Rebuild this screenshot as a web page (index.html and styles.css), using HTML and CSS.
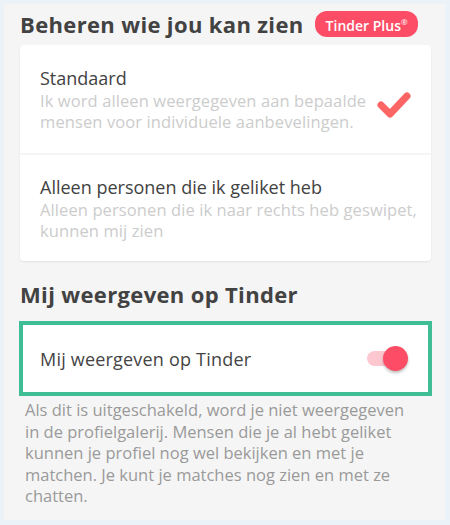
FILE: index.html
```html
<!DOCTYPE html>
<html lang="nl">
  <head>
    <meta charset="UTF-8" />
    <meta name="viewport" content="width=device-width, initial-scale=1.0" />
    <title>Beheren wie jou kan zien</title>
    <link rel="stylesheet" href="styles.css">
  </head>
  <body>
    <div class="screen">
      <div class="section-head">
        <h2>Beheren wie jou kan zien</h2>
        <span class="badge">Tinder Plus<sup>®</sup></span>
      </div>

      <div class="card">
        <div class="option">
          <div class="option-text">
            <div class="option-title">Standaard</div>
            <div class="option-sub">Ik word alleen weergegeven aan bepaalde mensen voor individuele aanbevelingen.</div>
          </div>
          <svg class="check" width="34" height="28" viewBox="0 0 34 28">
            <path d="M4 14 L13 23 L30 5" fill="none" stroke="#fd6464" stroke-width="7" stroke-linecap="round" stroke-linejoin="round" />
          </svg>
        </div>
        <div class="option">
          <div class="option-text">
            <div class="option-title">Alleen personen die ik geliket heb</div>
            <div class="option-sub">Alleen personen die ik naar rechts heb geswipet, kunnen mij zien</div>
          </div>
        </div>
      </div>

      <h2 class="title-2">Mij weergeven op Tinder</h2>

      <div class="toggle-row">
        <span>Mij weergeven op Tinder</span>
        <div class="switch">
          <div class="knob"></div>
        </div>
      </div>

      <p class="note">
        Als dit is uitgeschakeld, word je niet weergegeven in de profielgalerij. Mensen die je al hebt geliket kunnen je profiel nog wel bekijken en met je matchen. Je kunt je matches nog zien en met ze chatten.
      </p>
    </div>
  </body>
</html>
```

FILE: styles.css
```css
* {
  margin: 0;
  padding: 0;
  box-sizing: border-box;
  font-family: "Open Sans", "Lato", sans-serif;
}

body {
  width: 450px;
  height: 525px;
  background-color: #ebf3f9;
  padding: 4px 5px 5px 4px;
  overflow: hidden;
}

.screen {
  height: 516px;
  background-color: #f5f5f5;
  padding: 0 0 0 16px;
  overflow: hidden;
}

.section-head {
  display: flex;
  align-items: center;
  height: 36px;
  padding-top: 4px;
}

h2 {
  font-size: 22px;
  font-weight: 700;
  color: #424242;
  letter-spacing: 0.35px;
}

.badge {
  margin-left: 11px;
  background-color: #fd4d66;
  color: white;
  font-size: 14px;
  font-weight: 600;
  line-height: 16px;
  padding: 3px 10px 4px 11px;
  border-radius: 12px;
}

.badge sup {
  font-size: 8px;
  font-weight: 400;
}

.card {
  margin-top: 5px;
  width: 411px;
  background: white;
  border-radius: 4px;
  box-shadow: 0 1px 2px rgba(0, 0, 0, 0.08);
}

.option {
  display: flex;
  align-items: center;
  height: 108px;
  padding: 0 20px 0 20px;
}

.option + .option {
  border-top: 2px solid #f5f5f5;
  padding-right: 8px;
}

.option-text {
  flex: 1;
}

.option-title {
  font-size: 18px;
  color: #424242;
  line-height: 24px;
}

.option-sub {
  font-size: 16.5px;
  letter-spacing: 0.1px;
  color: #cccccc;
  line-height: 21px;
  margin-top: 0;
}

.check {
  margin-left: 4px;
  margin-top: 12px;
}

.title-2 {
  font-size: 22px;
  margin-top: 18px;
  margin-left: 0;
}

.toggle-row {
  margin-top: 12px;
  margin-left: -1px;
  width: 413px;
  height: 75px;
  border: 4px solid #3fbe95;
  background: white;
  display: flex;
  align-items: center;
  justify-content: space-between;
  padding: 0 22px 0 17px;
  font-size: 18px;
  letter-spacing: 0.2px;
  color: #444;
}

.switch {
  width: 38px;
  height: 15px;
  border-radius: 8px;
  background-color: #fdc7d0;
  position: relative;
  margin-right: 1px;
}

.knob {
  position: absolute;
  right: -3px;
  top: -5px;
  width: 25px;
  height: 25px;
  border-radius: 50%;
  background-color: #fd4d66;
  box-shadow: 0 2px 3px rgba(0, 0, 0, 0.25);
}

.note {
  margin-top: 3px;
  padding-left: 5px;
  width: 400px;
  font-size: 16.5px;
  line-height: 21.6px;
  color: #9a9a9a;
}
```
